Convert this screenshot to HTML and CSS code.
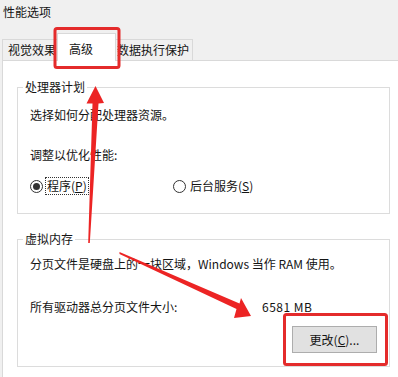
FILE: index.html
```html
<!DOCTYPE html>
<html lang="zh-CN">
<head>
<meta charset="utf-8">
<title>性能选项</title>
<link rel="stylesheet" href="styles.css">
</head>
<body>
<div class="window">
  <div class="title">性能选项</div>
  <div class="tabs">
    <div class="tab tab-visual">视觉效果</div>
    <div class="tab tab-adv active">高级</div>
    <div class="tab tab-dep">数据执行保护</div>
  </div>
  <div class="panel">
    <fieldset class="group group-cpu">
      <legend>处理器计划</legend>
      <div class="line first">选择如何分配处理器资源。</div>
      <div class="line second">调整以优化性能:</div>
      <div class="radios">
        <div class="radio-item">
          <span class="radio checked"></span>
          <span class="radio-label focus">程序(<u>P</u>)</span>
        </div>
        <div class="radio-item">
          <span class="radio"></span>
          <span class="radio-label">后台服务(<u>S</u>)</span>
        </div>
      </div>
    </fieldset>
    <fieldset class="group group-mem">
      <legend>虚拟内存</legend>
      <div class="line first-mem">分页文件是硬盘上的一块区域，Windows 当作 RAM 使用。</div>
      <div class="line size-row">
        <span class="size-label">所有驱动器总分页文件大小:</span>
        <span class="size-value">6581 MB</span>
      </div>
      <div class="btn-row">
        <button class="btn">更改(<u>C</u>)...</button>
      </div>
    </fieldset>
  </div>
</div>
<svg class="annot" width="398" height="377" viewBox="0 0 398 377">
  <rect x="55" y="28.5" width="64" height="39" rx="2" fill="none" stroke="#e42b2b" stroke-width="3"/>
  <rect x="284.5" y="314.5" width="102" height="50" rx="2" fill="none" stroke="#e42b2b" stroke-width="3"/>
  <polygon fill="#ec2424" points="95.5,86 104,103 98.5,103.5 89.8,243 88.2,243 92.5,103.5 86.5,103.5"/>
  <polygon fill="#ec2424" points="119.5,252 239.5,303.5 241,298 251,316 234,318 236.5,309 119.5,254"/>
</svg>
</body>
</html>
```
FILE: styles.css
```css
* { box-sizing: border-box; }
html, body {
  margin: 0;
  padding: 0;
}
body {
  width: 398px;
  height: 377px;
  overflow: hidden;
  position: relative;
  background: #f0f0f0;
  font-family: "Noto Sans CJK SC", "Noto Sans", sans-serif;
  font-size: 12px;
  color: #141414;
}
.window {
  display: flex;
  flex-direction: column;
  height: 377px;
}
.title {
  height: 33px;
  line-height: 24px;
  padding-left: 3px;
}
.tabs {
  display: flex;
  align-items: flex-end;
  height: 27px;
}
.tab {
  height: 21px;
  line-height: 19px;
  border: 1px solid #d9d9d9;
  border-bottom: none;
  background: #f0f0f0;
  white-space: nowrap;
}
.tab-visual {
  margin-left: 2px;
  width: 58px;
  padding-left: 5px;
}
.tab-adv {
  width: 59px;
  margin-left: -3px;
  margin-right: -2px;
  padding-left: 11px;
}
.tab-dep {
  width: 79px;
  padding-left: 2px;
}
.tab.active {
  position: relative;
  z-index: 1;
  height: 28px;
  margin-bottom: -1px;
  background: #fff;
  line-height: 27px;
  padding-top: 1px;
}
.panel {
  flex: 1;
  margin-left: 2px;
  background: #fff;
  border-top: 1px solid #d9d9d9;
  border-left: 1px solid #d9d9d9;
  padding: 18px 8px 0 14px;
}
.group {
  margin: 0;
  border: 1px solid #dcdcdc;
  padding: 0 12px;
  min-width: 0;
}
legend {
  line-height: 16px;
  padding: 0 2px;
  margin-left: -7px;
}
.line {
  line-height: 16px;
  white-space: nowrap;
}
.first { margin-top: 12px; }
.second { margin-top: 24px; }
.radios {
  display: flex;
  margin-top: 14px;
  height: 18px;
  align-items: center;
}
.group-cpu { padding-bottom: 18px; }
.radio-item {
  display: flex;
  align-items: center;
  width: 143px;
}
.radio {
  width: 13px;
  height: 13px;
  border: 1px solid #333;
  border-radius: 50%;
  display: flex;
  align-items: center;
  justify-content: center;
  margin-right: 2px;
  background: #fff;
}
.radio.checked::after {
  content: "";
  width: 7px;
  height: 7px;
  border-radius: 50%;
  background: #333;
}
.radio-label {
  line-height: 16px;
  padding: 0 1px;
  border: 1px dotted transparent;
}
.radio-label.focus {
  border-color: #333;
}
.group-mem {
  margin-top: 17px;
  padding-bottom: 13px;
}
.first-mem { margin-top: 9px; }
.size-row {
  margin-top: 27px;
  display: flex;
}
.size-label { width: 232px; }
.size-value { letter-spacing: 0.5px; }
.btn-row {
  display: flex;
  justify-content: flex-end;
  margin-top: 11px;
}
.btn {
  width: 85px;
  height: 27px;
  background: #e1e1e1;
  border: 1px solid #adadad;
  font-family: inherit;
  font-size: 12px;
  color: #141414;
  padding: 0;
}
.annot {
  position: absolute;
  left: 0;
  top: 0;
  pointer-events: none;
}
```
